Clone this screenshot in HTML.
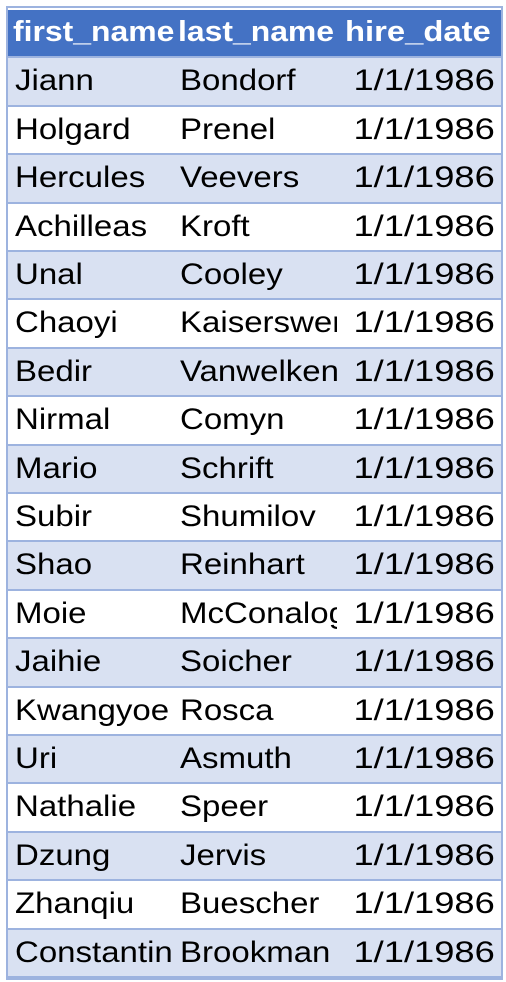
<!DOCTYPE html><html><head><style>
html,body{margin:0;padding:0;background:#fff;width:506px;height:982px;overflow:hidden}
#t{position:absolute;left:6px;top:6px;width:493px;height:970px;border:2px solid #9db3df;background:#fff}
.r{position:absolute;left:0;width:493px;height:46.4px;border-bottom:2px solid #9db3df;font-family:"Liberation Sans",sans-serif;font-size:30px;line-height:45px;color:#000}
.r.b{background:#d9e1f2}.r.h{background:#4472c4;color:#fff;font-weight:bold;border-bottom:2px solid #9db3df;font-size:29px}
.c{position:absolute;top:0;height:46px;overflow:hidden;white-space:nowrap}
.c span{display:inline-block;transform:scaleX(1.1);transform-origin:0 50%}
.c3 span{transform:scaleX(1.21);transform-origin:100% 50%}
.h .c span{transform:scaleX(1.1);transform-origin:0 50%}
.h .c3 span{transform:scaleX(1.13)}
.c1{left:7px;width:158px}.c2{left:172px;width:157px}.c3{left:334px;width:153px;text-align:right}
.h .c1{left:5px;width:162px}.h .c2{left:170px;width:162px}
</style></head><body><div id="t">
<div class="r h" style="top:2px"><div class="c c1"><span>first_name</span></div><div class="c c2"><span>last_name</span></div><div class="c c3" style="text-align:left;left:337px"><span>hire_date</span></div></div>
</div>
<script>
var d=[["Jiann","Bondorf"],["Holgard","Prenel"],["Hercules","Veevers"],["Achilleas","Kroft"],["Unal","Cooley"],["Chaoyi","Kaiserswerth"],["Bedir","Vanwelkenhuysen"],["Nirmal","Comyn"],["Mario","Schrift"],["Subir","Shumilov"],["Shao","Reinhart"],["Moie","McConalogue"],["Jaihie","Soicher"],["Kwangyoe","Rosca"],["Uri","Asmuth"],["Nathalie","Speer"],["Dzung","Jervis"],["Zhanqiu","Buescher"],["Constantin","Brookman"]];
var t=document.getElementById('t'),h='';
for(var i=0;i<d.length;i++){h+='<div class="r'+(i%2==0?' b':'')+'" style="top:'+(2+48.4*(i+1)).toFixed(1)+'px"><div class="c c1"><span>'+d[i][0]+'</span></div><div class="c c2"><span>'+d[i][1]+'</span></div><div class="c c3"><span>1/1/1986</span></div></div>';}
t.insertAdjacentHTML('beforeend',h);
</script>
</body></html>
